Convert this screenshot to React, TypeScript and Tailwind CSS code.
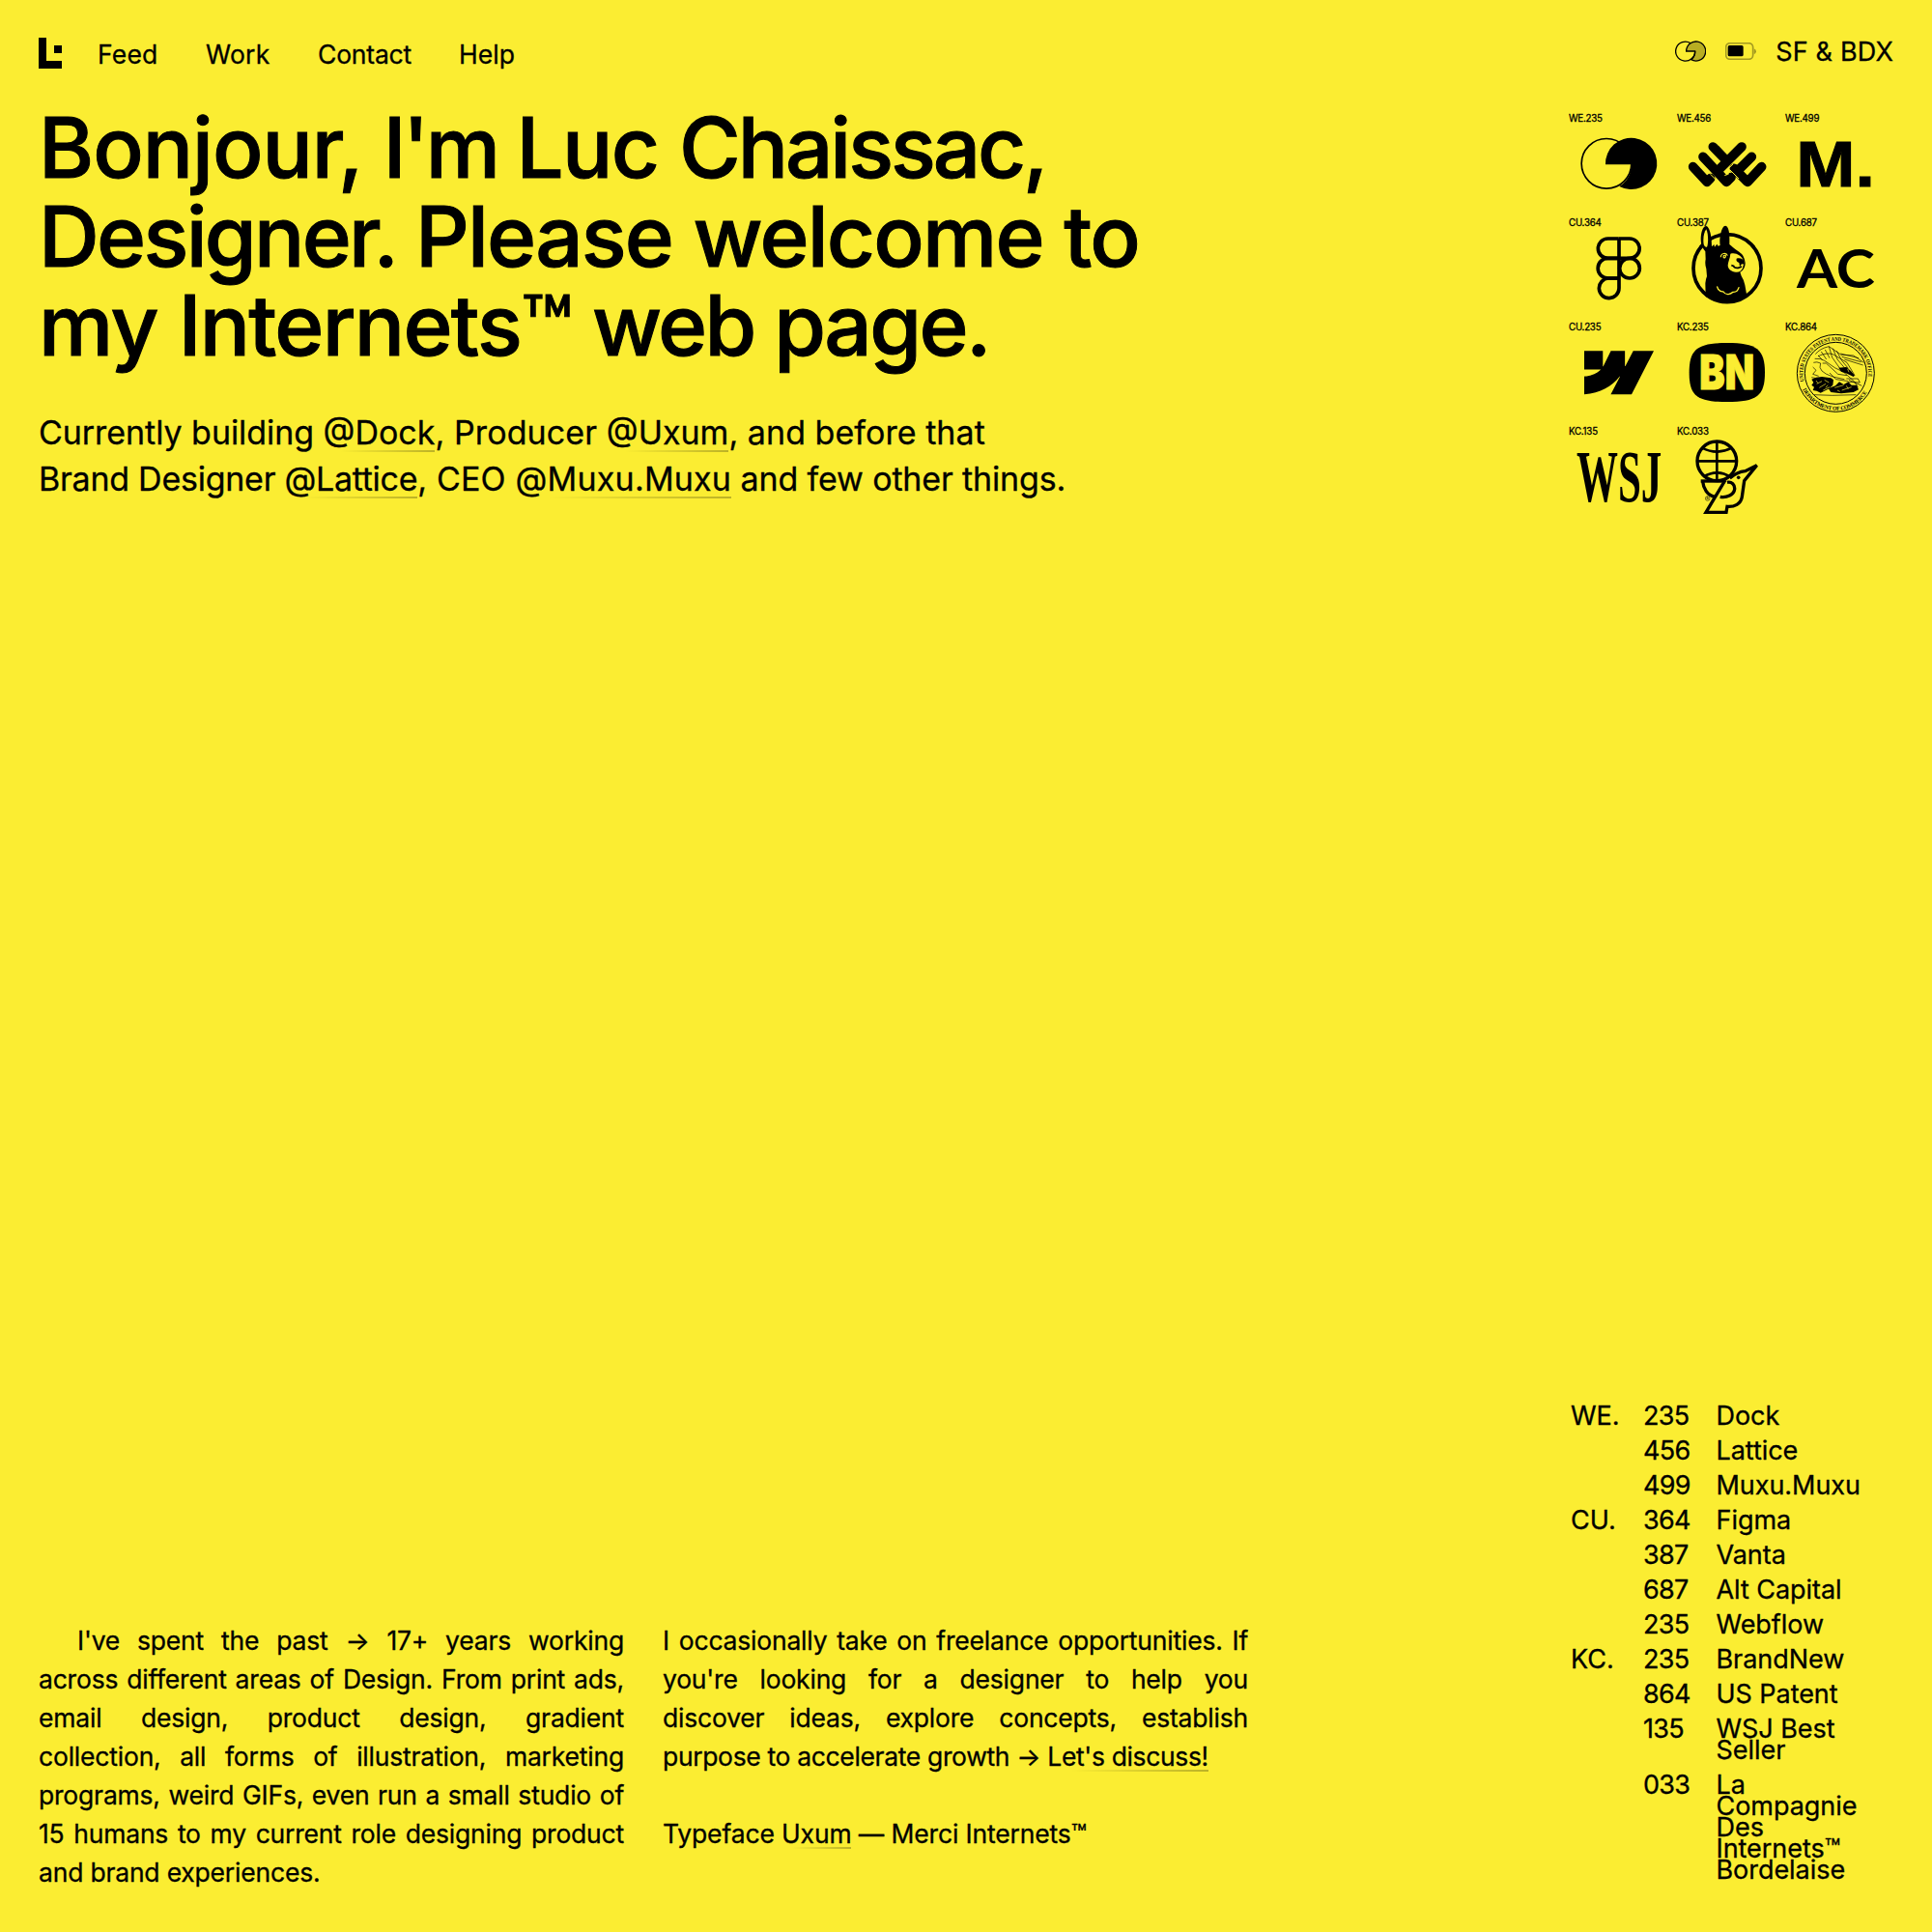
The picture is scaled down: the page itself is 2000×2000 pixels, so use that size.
import React from 'react';

const INK = '#000000';
const SUN = '#fbed32';

function BrandMark() {
  return (
    <svg width="24" height="32" viewBox="0 0 24 32" fill={INK}>
      <path d="M0 0H8V24H24V32H0Z" />
      <rect x="16" y="8" width="8" height="8" />
    </svg>
  );
}

function PairIcon() {
  return (
    <svg width="32" height="22" viewBox="105 64 96 66" fill="none" stroke={INK} strokeWidth="4">
      <path d="M140 97A30 30 0 1 1 155 123A30 30 0 0 0 167 97Z" fill="#b8ae22" />
      <path d="M153 72A30 30 0 1 0 167 97" />
    </svg>
  );
}

function BatteryIcon() {
  return (
    <svg width="32" height="18" viewBox="261 69 96 54">
      <rect x="263" y="71" width="84" height="50" rx="13" fill="none" stroke="#a39a20" strokeWidth="5" />
      <path d="M350 88Q357 91 357 97T350 106Z" fill="#a39a20" />
      <rect x="269" y="78" width="48" height="34" rx="5" fill={INK} />
    </svg>
  );
}

function DockLogo() {
  return (
    <>
      <circle cx="159" cy="193" r="77.5" fill="none" stroke={INK} strokeWidth="5" />
      <path d="M156 196A80 80 0 1 1 199 264A80 80 0 0 0 236 196Z" fill={INK} />
    </>
  );
}

function LatticeLogo() {
  return (
    <g fill="none" strokeLinecap="round" strokeLinejoin="round">
      <g stroke={INK} strokeWidth="29">
        <path d="M428 203L471 250L482 239" />
        <path d="M459 172L532 250L546 236" />
        <path d="M490 141L528 180" />
        <path d="M579 141L506 214" />
        <path d="M610 172L570 212" />
        <path d="M641 203L597 250L556 208" />
      </g>
      <g stroke={SUN} strokeWidth="3" strokeLinecap="butt">
        <path d="M482 226L506 250" />
        <path d="M526 230L540 224" />
        <path d="M542 212L570 240" />
        <path d="M539 207L552 195" />
      </g>
    </g>
  );
}

function MuxuLogo() {
  return (
    <text x="748" y="263" fontFamily="Liberation Sans" fontWeight="700" fontSize="200" textLength="245" lengthAdjust="spacingAndGlyphs" fill={INK} stroke={INK} strokeWidth="3">
      M.
    </text>
  );
}

function FigmaLogo() {
  return (
    <g fill="none" stroke={INK} strokeWidth="11">
      <path d="M197 426H163.500A30.500 30.500 0 0 0 163.500 487H197" />
      <path d="M197 426H231A30.500 30.500 0 0 1 231 487H197" />
      <path d="M197 487H163.500A31 31 0 0 0 163.500 549H197" />
      <circle cx="231" cy="518" r="31" />
      <path d="M197 549H165A31 31 0 1 0 198 580V425" />
    </g>
  );
}

function VantaLogo() {
  return (
    <>
      <circle cx="144" cy="158" r="105" fill="none" stroke={INK} strokeWidth="11" />
      <path
        fill={INK}
        d="M77 246L76 205Q77 192 81 183L79 160Q74 145 77 130L76 106C64 92 60 76 63 54C65 38 72 26 79 27C88 29 94 52 95 70L96 91L103 84L105 92L112 83L116 89L122 87C119 72 123 45 130 33C136 22 143 25 147 35C152 48 151 68 151 84C163 94 171 101 181 107C194 116 198 126 200 142C200 157 191 168 184 170L188 182Q196 194 199 210L205 244Q176 266 140 267Q104 264 77 246Z"
      />
      <path fill={SUN} d="M79 37C72 46 68 64 71 84C73 90 80 96 82 90C86 76 85 50 79 37Z" />
      <path
        fill={SUN}
        d="M154 113C163 110 174 112 181 118C188 122 193 130 196 138C199 146 192 149 193 155C190 165 181 171 171 170C157 169 146 160 146 149C146 139 153 127 154 113Z"
      />
      <path fill={INK} d="M173 128C183 124 195 130 197 138L198 146L189 145L183 153L181 141Q170 137 173 128Z" />
      <path d="M157 149L164 151Q165 158 178 157L189 153" fill="none" stroke={INK} strokeWidth="5" />
      <path d="M124 124C124 110 142 109 145 119M133 126Q130 116 139 118Q140 126 133 126" fill="none" stroke={SUN} strokeWidth="3.500" />
      <path
        d="M113 216C117 232 127 230 132 231C140 244 156 238 162 232C172 233 178 225 180 218"
        fill="none"
        stroke={SUN}
        strokeWidth="4"
        strokeLinecap="round"
      />
    </>
  );
}

function AltCapitalLogo() {
  return (
    <text x="750" y="578" fontFamily="Lato" fontWeight="700" fontSize="169" textLength="243" lengthAdjust="spacingAndGlyphs" fill={INK}>
      AC
    </text>
  );
}

function WebflowLogo() {
  return (
    <path
      transform="translate(90 115) scale(0.2)"
      fill={INK}
      d="M1080 0L735.400 673.700H411.700L555.900 394.500H549.500C430.500 549 252.900 650.700 0 673.700V398.400S161.700 388.800 257 288.700H0V0H289V237.600H295.400L413.400 0H631.900V236.100H638.400L760.700 0Z"
    />
  );
}

function BrandNewLogo() {
  return (
    <>
      <path fill={INK} d="M416 182C416 110 440 90 533 90S651 110 651 182S626 273 533 273S416 254 416 182Z" />
      <text
        x="448"
        y="235"
        fontFamily="Inter"
        fontWeight="900"
        fontSize="147"
        textLength="170"
        lengthAdjust="spacingAndGlyphs"
        fill={SUN}
        stroke={SUN}
        strokeWidth="3"
      >
        BN
      </text>
    </>
  );
}

function PatentSeal() {
  return (
    <>
      <g fill="none" stroke={INK}>
        <circle cx="151" cy="139" r="120" strokeWidth="3" />
        <circle cx="151" cy="139" r="96" strokeWidth="3" />
        <path id="seal-top" d="M52.500 164A101.500 101.500 0 1 1 249.500 164" stroke="none" />
        <path id="seal-bottom" d="M41 167A113 113 0 0 0 261 167" stroke="none" />
      </g>
      <g fontFamily="Liberation Serif" fontWeight="700" fontSize="17" fill={INK}>
        <text textLength="354" lengthAdjust="spacingAndGlyphs">
          <textPath href="#seal-top" textLength="354" lengthAdjust="spacingAndGlyphs">
            UNITED STATES PATENT AND TRADEMARK OFFICE
          </textPath>
        </text>
        <text>
          <textPath href="#seal-bottom" startOffset="23" textLength="246">DEPARTMENT OF COMMERCE</textPath>
        </text>
      </g>
      <path d="M76 158L90 152L108 150L136 154L144 160L142 176L128 188L104 200L92 194L80 192L84 182L76 176L82 168Z" fill={INK} />
      <path d="M160 122L184 120L198 132L210 146L206 150L186 140L168 134Z" fill={INK} />
      <path d="M128 186L150 178L162 166L176 174L190 166L200 176L216 176L222 190L206 198L168 202L136 198Z" fill={INK} />
      <g fill="none" stroke={INK} strokeWidth="2">
        <path d="M88 80Q102 62 130 56L168 82L206 84L238 106M96 86Q124 74 142 80L186 106L210 146" />
        <path d="M86 94Q104 92 116 100T148 122L176 136L208 164L220 182M130 56L140 90L164 124M142 62L156 96L178 122M154 70L170 100L190 124" />
        <path d="M82 106Q92 102 104 108Q98 122 108 132T142 150L178 158M80 120L90 130L80 142L98 148M76 152L96 156" />
        <path d="M166 78L222 92M170 88L230 104M178 96L236 114M118 66L132 92M106 72L122 96M96 84L110 98" />
        <path d="M110 108Q122 104 130 116L158 142L186 146M184 156L220 156L226 168L190 166M192 160L232 178M132 138L152 158L190 164" />
        <path d="M84 206L140 208L214 206" />
      </g>
      <g fill="none" stroke={SUN} strokeWidth="2">
        <path d="M92 172L108 164M100 184L120 172M116 160L130 168M112 192L132 182M148 184L176 176M170 192L200 182M188 126L192 136M90 162L96 170M120 184L126 176M184 178L190 188M156 192L164 196" />
      </g>
    </>
  );
}

function JournalLogo() {
  return (
    <text x="66" y="581" fontFamily="Liberation Serif" fontWeight="700" fontSize="226" textLength="265" lengthAdjust="spacingAndGlyphs" fill={INK}>
      WSJ
    </text>
  );
}

function CompagnieLogo() {
  return (
    <g fill="none" stroke={INK} strokeWidth="10" strokeLinejoin="miter">
      <circle cx="112" cy="97" r="61" />
      <path d="M112 36V158M51 97H173" strokeWidth="8" />
      <path d="M66 56Q112 80 158 56M70 146Q112 120 154 146" strokeWidth="8" />
      <path d="M62 159H138" strokeWidth="10" />
      <path d="M68 160C70 182 82 204 106 208M138 156L78 256H141L144 238C166 240 187 230 190 208L197 158L236 110L200 128C182 130 168 136 152 150" />
      <path d="M144 163C158 160 168 170 167 184C165 202 142 212 122 208" />
      <circle cx="179" cy="148" r="5.500" fill={INK} stroke="none" />
      <circle cx="83" cy="213" r="7" strokeWidth="1.500" />
      <path d="M81 217V209H84Q87 211 84 213H81M84 213L86 217" strokeWidth="1.500" />
    </g>
  );
}

const logos = [
  { code: 'WE.235', box: '42 69 312 288', Mark: DockLogo },
  { code: 'WE.456', box: '378 69 312 288', Mark: LatticeLogo },
  { code: 'WE.499', box: '714 69 312 288', Mark: MuxuLogo },
  { code: 'CU.364', box: '42 393 312 288', Mark: FigmaLogo },
  { code: 'CU.387', box: '-12 33 312 288', Mark: VantaLogo },
  { code: 'CU.687', box: '714 393 312 288', Mark: AltCapitalLogo },
  { code: 'CU.235', box: '42 57 312 288', Mark: WebflowLogo },
  { code: 'KC.235', box: '378 57 312 288', Mark: BrandNewLogo },
  { code: 'KC.864', box: '-6 12 312 288', Mark: PatentSeal },
  { code: 'KC.135', box: '42 381 312 288', Mark: JournalLogo },
  { code: 'KC.033', box: '-12 21 312 288', Mark: CompagnieLogo },
];

const index: { group?: string; code: string; name: string[] }[] = [
  { group: 'WE.', code: '235', name: ['Dock'] },
  { code: '456', name: ['Lattice'] },
  { code: '499', name: ['Muxu.Muxu'] },
  { group: 'CU.', code: '364', name: ['Figma'] },
  { code: '387', name: ['Vanta'] },
  { code: '687', name: ['Alt Capital'] },
  { code: '235', name: ['Webflow'] },
  { group: 'KC.', code: '235', name: ['BrandNew'] },
  { code: '864', name: ['US Patent'] },
  { code: '135', name: ['WSJ Best', 'Seller'] },
  { code: '033', name: ['La', 'Compagnie', 'Des', 'Internets™', 'Bordelaise'] },
];

const story = [
  "I've spent the past → 17+ years working",
  'across different areas of Design. From print ads,',
  'email design, product design, gradient',
  'collection, all forms of illustration, marketing',
  'programs, weird GIFs, even run a small studio of',
  '15 humans to my current role designing product',
];

const offer = [
  'I occasionally take on freelance opportunities. If',
  "you're looking for a designer to help you",
  'discover ideas, explore concepts, establish',
];

function Link({ children, className = '' }: { children: React.ReactNode; className?: string }) {
  return (
    <a
      className={
        'bg-gradient-to-r from-transparent from-15% to-black/25 bg-[length:100%_2px] bg-[position:0_100%] bg-no-repeat ' +
        className
      }
    >
      {children}
    </a>
  );
}

export default function App() {
  return (
    <div className="flex h-[2000px] w-[2000px] flex-col justify-between overflow-hidden bg-[#fbed32] p-10 font-['Inter',sans-serif] text-black [-webkit-text-stroke:0.3px_#000]">
      <div>
        <header className="flex h-[66px] justify-between">
          <nav className="flex text-[26.5px] leading-8">
            <a className="-mt-px w-[61px]">
              <BrandMark />
            </a>
            <a className="w-28 tracking-[0.2px]">Feed</a>
            <a className="w-[116px] tracking-[0.2px]">Work</a>
            <a className="w-[146px] tracking-[-0.2px]">Contact</a>
            <a className="tracking-[0.1px]">Help</a>
          </nav>
          <div className="-mt-[3px] flex h-8 items-center text-[27px] leading-8">
            <PairIcon />
            <span className="ml-5">
              <BatteryIcon />
            </span>
            <span className="mt-0.5 ml-5 tracking-[0.15px] whitespace-nowrap">SF &amp; BDX</span>
          </div>
        </header>

        <div className="flex justify-between">
          <div className="whitespace-nowrap">
            <h1 className="pt-px text-[87px] leading-[92px] font-medium [-webkit-text-stroke:1px_#000]">
              <span className="block">
                <span className="tracking-[-1px]">Bonjour, </span>
                <span className="tracking-[-3.4px]">I'm </span>
                <span className="tracking-[-1.6px]">Luc </span>
                <span className="tracking-[-3.1px]">Chaissac,</span>
              </span>
              <span className="block">
                <span className="tracking-[-2.7px]">Designer. </span>
                <span className="tracking-[-1.8px]">Please welcome to</span>
              </span>
              <span className="block">
                <span className="tracking-[-1.5px]">my </span>
                <span className="tracking-[-1.7px]">Internets™ </span>
                <span className="tracking-[-2.6px]">web page.</span>
              </span>
            </h1>
            <p className="mt-[41px] text-[34px] leading-[48px]">
              <span className="block">
                <span className="tracking-[-0.05px]">Currently building </span>
                <Link>@Dock</Link>
                <span className="tracking-[0.1px]">, Producer </span>
                <Link>@Uxum</Link>
                <span className="tracking-[0.05px]">, and before that</span>
              </span>
              <span className="block">
                <span className="tracking-[-0.25px]">Brand Designer </span>
                <Link className="tracking-[-0.3px]">@Lattice</Link>
                <span className="tracking-[0.2px]">, CEO </span>
                <Link className="tracking-[0.2px]">@Muxu.Muxu</Link>
                <span className="tracking-[-0.15px]"> and few other things.</span>
              </span>
            </p>
          </div>

          <div className="mt-[11px] grid w-[336px] grid-cols-[repeat(3,112px)] content-start">
            {logos.map(({ code, box, Mark }) => (
              <div key={code} className="h-[108px]">
                <div className="h-[11px] text-[9.7px] leading-3 tracking-[-0.2px]">{code}</div>
                <svg className="overflow-visible [-webkit-text-stroke:0px]" width="104" height="96" viewBox={box}>
                  <Mark />
                </svg>
              </div>
            ))}
          </div>
        </div>
      </div>

      <div className="flex items-end justify-between">
        <div className="mb-0.5 grid grid-cols-[606px_606px] gap-x-10 text-[26.5px] leading-10 tracking-[-0.2px] whitespace-nowrap">
          <div>
            {story.map((line, i) => (
              <p key={line} className={i === 0 ? 'pl-10 [text-align-last:justify]' : '[text-align-last:justify]'}>
                {line}
              </p>
            ))}
            <p>and brand experiences.</p>
          </div>
          <div>
            {offer.map((line) => (
              <p key={line} className="[text-align-last:justify]">
                {line}
              </p>
            ))}
            <p className="tracking-[-0.35px]">
              purpose to accelerate growth → <Link>Let's discuss!</Link>
            </p>
            <p className="mt-10 tracking-[-0.15px]">
              Typeface <Link>Uxum</Link> — Merci Internets™
            </p>
          </div>
        </div>

        <div className="-mb-px grid w-[336px] grid-cols-[77px_75.5px_160px] text-[27px] leading-[22px] whitespace-nowrap">
          {index.map(({ group, code, name }, i) => (
            <React.Fragment key={i}>
              <div className="mb-[14px] pl-0.5">{group}</div>
              <div className="mb-[14px] tracking-[-0.7px]">{code}</div>
              <div className="mb-[14px] tracking-[-0.05px]">
                {name.map((part) => (
                  <div key={part}>{part}</div>
                ))}
              </div>
            </React.Fragment>
          ))}
        </div>
      </div>
    </div>
  );
}
